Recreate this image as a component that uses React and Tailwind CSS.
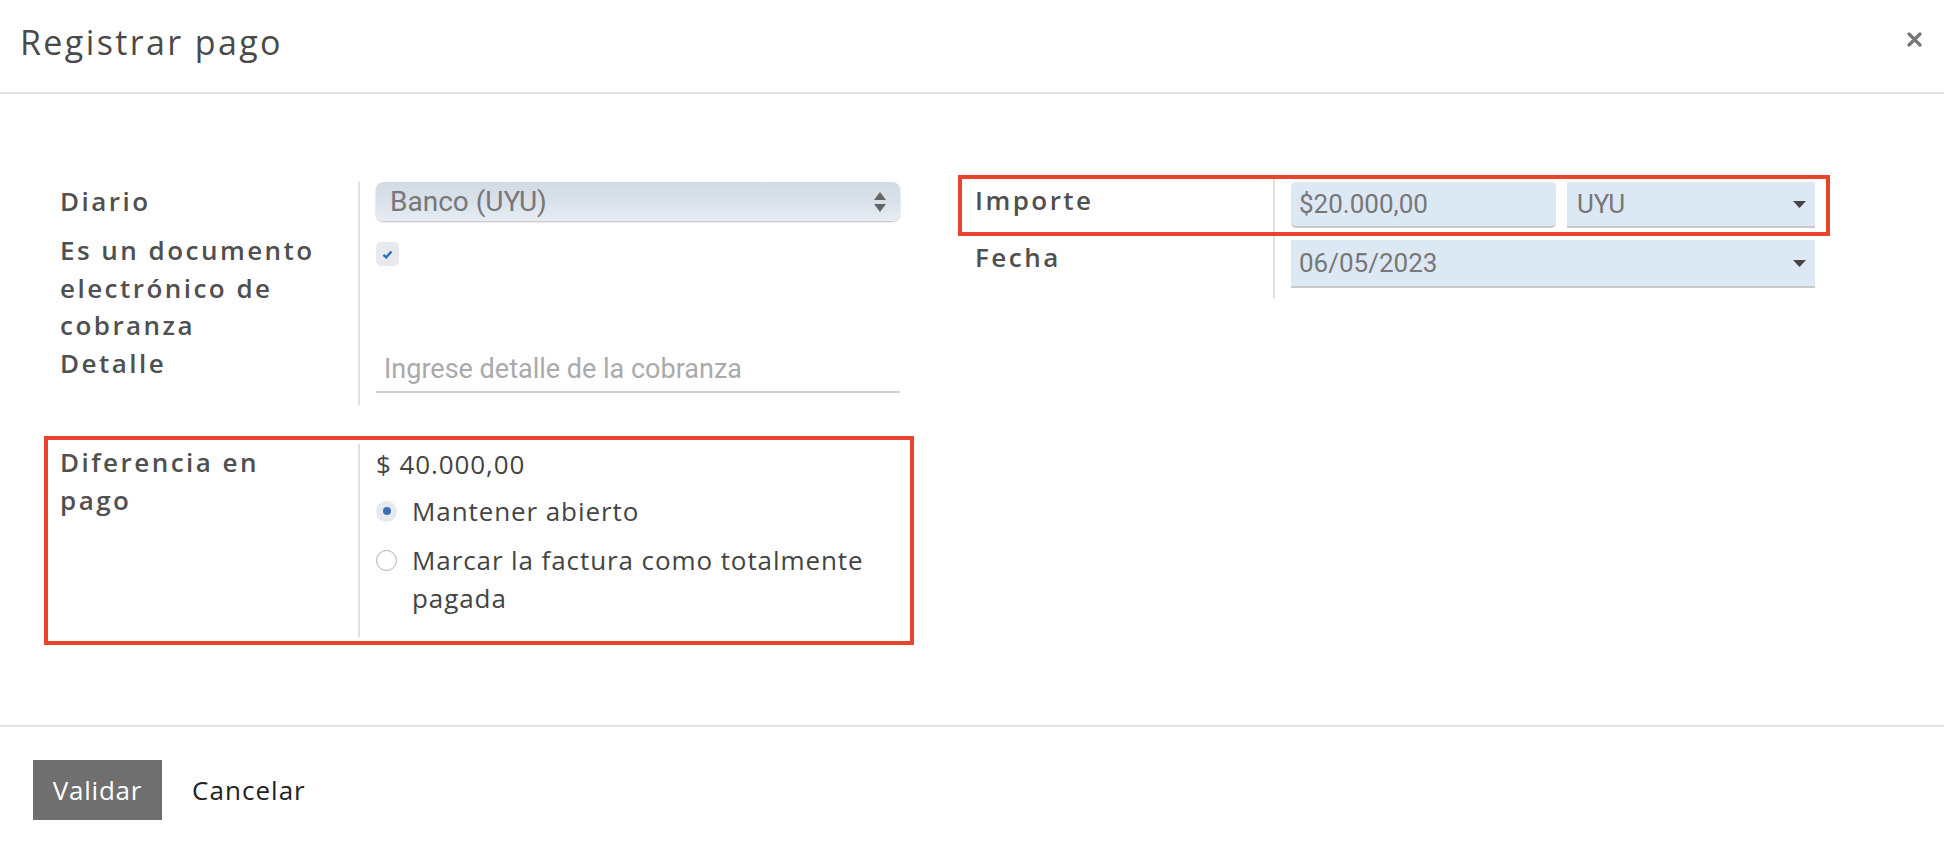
import React from "react";

const label = "font-['Open_Sans',sans-serif] font-semibold text-[26px] tracking-[0.095em] text-[#505050]";
const inputText = "font-['Roboto',sans-serif] text-[26px] text-[#777]";

function Caret() {
  return (
    <svg width="13" height="7" viewBox="0 0 13 7" className="shrink-0">
      <path d="M0 0 L13 0 L6.5 7 Z" fill="#444" />
    </svg>
  );
}

function UpDown() {
  return (
    <svg width="12" height="20" viewBox="0 0 12 20" className="shrink-0">
      <path d="M6 0 L12 8 L0 8 Z" fill="#666" />
      <path d="M0 12 L12 12 L6 20 Z" fill="#666" />
    </svg>
  );
}

function Radio({ checked, children }) {
  return (
    <div className="flex items-start gap-[15px]">
      {checked ? (
        <span className="mt-[9px] flex h-[21px] w-[21px] shrink-0 items-center justify-center rounded-full bg-[#e6e9ee]">
          <span className="h-[8px] w-[8px] rounded-full bg-[#3a6fb8]" />
        </span>
      ) : (
        <span className="mt-[9px] h-[21px] w-[21px] shrink-0 rounded-full border-[1.5px] border-[#aab1ba] bg-white" />
      )}
      <span className="leading-[38px]">{children}</span>
    </div>
  );
}

export default function App() {
  return (
    <div className="h-[852px] w-full bg-white">
      {/* header */}
      <div className="flex h-[94px] items-start justify-between border-b-2 border-[#e1e4e8] pl-[20px] pr-[22px]">
        <h1 className="pt-[22px] font-['Open_Sans',sans-serif] text-[34px] leading-[40px] tracking-[0.07em] text-[#4a4a4a]">
          Registrar pago
        </h1>
        <button className="mt-[32px]">
          <svg width="15" height="15" viewBox="0 0 15 15">
            <path d="M2 2 L13 13 M13 2 L2 13" stroke="#777" strokeWidth="3.2" strokeLinecap="round" />
          </svg>
        </button>
      </div>

      {/* body */}
      <div className="grid h-[631px] grid-cols-[870px_872px] items-start gap-x-[44px] pl-[44px] pt-[81px]">
        {/* left column */}
        <div>
          <div className="ml-[4px] mr-[4px] mt-[7px]">
            <div className="flex h-[50px]">
              <div className={`w-[310px] shrink-0 pl-[12px] leading-[38px] ${label}`}>Diario</div>
              <div className="flex-1 border-l-2 border-[#e0e0e0] pl-[16px] pr-[10px]">
                <div className="flex h-[39px] items-center justify-between rounded-[8px] bg-linear-to-b from-[#d2dae4] via-[#d9e1ea] to-[#e7edf4] pl-[14px] pr-[14px] font-['Roboto',sans-serif] text-[28px] text-[#777] shadow-[0_1px_2px_rgba(0,0,0,0.28)]">
                  <span>Banco (UYU)</span>
                  <UpDown />
                </div>
              </div>
            </div>
            <div className="flex">
              <div className={`w-[310px] shrink-0 pl-[12px] leading-[37.5px] ${label}`}>
                Es un documento electrónico de cobranza
              </div>
              <div className="flex-1 border-l-2 border-[#e0e0e0] pl-[16px] pr-[10px]">
                <div className="mt-[10px] flex h-[24px] w-[23px] items-center justify-center rounded-[5px] bg-[#e6e9ee]">
                  <svg width="11" height="9" viewBox="0 0 11 9">
                    <path d="M1.5 4.8 L4.2 7.3 L9.5 1.5" stroke="#2f6db5" strokeWidth="2.4" fill="none" />
                  </svg>
                </div>
              </div>
            </div>
            <div className="flex h-[60px]">
              <div className={`w-[310px] shrink-0 pl-[12px] leading-[37.5px] ${label}`}>Detalle</div>
              <div className="flex-1 border-l-2 border-[#e0e0e0] pl-[16px] pr-[10px]">
                <div className="flex h-[48px] items-center border-b-2 border-[#cfcfcf] pl-[8px] pt-[4px] font-['Roboto',sans-serif] text-[27px] text-[#aaa]">
                  Ingrese detalle de la cobranza
                </div>
              </div>
            </div>
          </div>

          <div className="mt-[31px] border-4 border-[#e8432b]">
            <div className="flex">
              <div className={`w-[310px] shrink-0 pl-[12px] pt-[3px] leading-[38px] ${label}`}>
                Diferencia en
                <br />
                pago
              </div>
              <div className="my-[4px] flex-1 border-l-2 border-[#e0e0e0] pb-[20px] pl-[16px] pr-[10px] pt-[1px] font-['Open_Sans',sans-serif] text-[26px] tracking-[0.035em] text-[#444]">
                <div className="leading-[38px]">$ 40.000,00</div>
                <div className="mt-[9px] flex flex-col gap-[11px]">
                  <Radio checked>Mantener abierto</Radio>
                  <Radio>Marcar la factura como totalmente pagada</Radio>
                </div>
              </div>
            </div>
          </div>
        </div>

        {/* right column */}
        <div>
          <div className="border-4 border-[#e8432b]">
            <div className="flex">
              <div className={`w-[311px] shrink-0 pl-[13px] pt-[2px] leading-[38px] ${label}`}>Importe</div>
              <div className="flex flex-1 gap-[11px] border-l-2 border-[#e0e0e0] pb-[4px] pl-[16px] pr-[11px] pt-[3px]">
                <div className={`flex h-[46px] w-[265px] items-center rounded-[5px] border-b-2 border-[#c9c9c9] bg-[#dde8f5] pl-[8px] ${inputText}`}>
                  $20.000,00
                </div>
                <div className={`flex h-[46px] flex-1 items-center justify-between border-b-2 border-[#c9c9c9] bg-[#dde8f5] pl-[10px] pr-[9px] ${inputText}`}>
                  <span>UYU</span>
                  <Caret />
                </div>
              </div>
            </div>
          </div>
          <div className="mx-[4px] flex h-[62px]">
            <div className={`w-[311px] shrink-0 pl-[13px] pt-[2px] leading-[38px] ${label}`}>Fecha</div>
            <div className="flex-1 border-l-2 border-[#e0e0e0] pl-[16px] pr-[11px] pt-[4px]">
              <div className={`flex h-[48px] items-center justify-between border-b-2 border-[#c9c9c9] bg-[#dde8f5] pl-[8px] pr-[9px] ${inputText}`}>
                <span>06/05/2023</span>
                <Caret />
              </div>
            </div>
          </div>
        </div>
      </div>

      {/* footer */}
      <div className="flex items-center gap-[30px] border-t-2 border-[#e1e4e8] pl-[33px] pt-[33px]">
        <button className="h-[60px] w-[129px] bg-[#6f6f6f] font-['Open_Sans',sans-serif] text-[26px] tracking-[0.03em] text-white">
          Validar
        </button>
        <button className="font-['Open_Sans',sans-serif] text-[26px] tracking-[0.04em] text-[#222]">Cancelar</button>
      </div>
    </div>
  );
}
